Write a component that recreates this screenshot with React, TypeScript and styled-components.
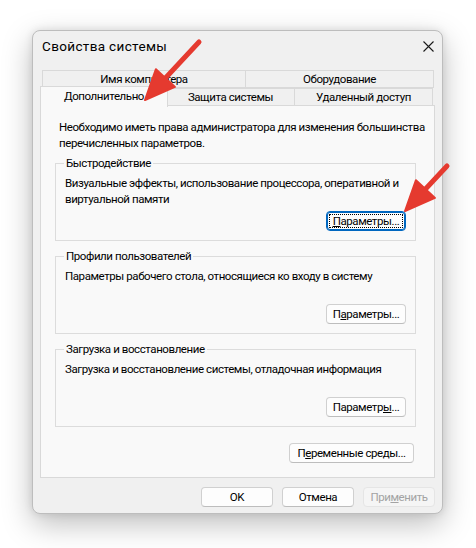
import React from 'react';
import styled, { createGlobalStyle } from 'styled-components';

const Global = createGlobalStyle`
  html, body { margin: 0; padding: 0; background: #ffffff; }
  body {
    font-family: Roboto, "Liberation Sans", Arial, sans-serif;
    font-size: 11.5px;
    letter-spacing: -0.42px;
    color: #000;
  }
  * { box-sizing: border-box; }
`;

const Page = styled.div`
  position: relative;
  width: 476px;
  height: 548px;
  padding: 30px 0 0 32px;
`;

const Window = styled.div`
  width: 411px;
  height: 484px;
  background: #f0f0f0;
  border: 1px solid #bdbdbd;
  border-radius: 8px;
  box-shadow: 0 10px 30px rgba(0, 0, 0, 0.26), 0 0 8px rgba(0, 0, 0, 0.1);
  display: flex;
  flex-direction: column;
`;

const TitleBar = styled.div`
  height: 30px;
  display: flex;
  align-items: center;
  justify-content: space-between;
  padding-left: 9px;
`;

const Title = styled.span`
  font-size: 13.5px;
  letter-spacing: 0.35px;
`;

const CloseBox = styled.div`
  width: 28px;
  height: 30px;
  display: flex;
  align-items: center;
  justify-content: center;
`;

const Body = styled.div`
  flex: 1;
  display: flex;
  flex-direction: column;
  padding: 9px 7px 0 7px;
  white-space: nowrap;
`;

const TabStrip = styled.div`
  display: flex;
  flex-direction: column;
`;

const TabRow = styled.div<{ $front?: boolean }>`
  display: flex;
  padding: 0 2px;
  height: 18px;
  position: relative;
  z-index: ${(p) => (p.$front ? 2 : 1)};
`;

const Tab = styled.div<{ $w: number; $selected?: boolean }>`
  flex: none;
  width: ${(p) => p.$w}px;
  height: ${(p) => (p.$selected ? 21 : 18)}px;
  margin-top: ${(p) => (p.$selected ? -2 : 0)}px;
  margin-left: ${(p) => (p.$selected ? -2 : -1)}px;
  margin-right: ${(p) => (p.$selected ? -1 : 0)}px;
  &:first-child { margin-left: ${(p) => (p.$selected ? -2 : 0)}px; }
  border: 1px solid #d9d9d9;
  border-bottom: ${(p) => (p.$selected ? 'none' : '1px solid #d9d9d9')};
  background: ${(p) => (p.$selected ? '#f9f9f9' : '#f0f0f0')};
  display: flex;
  align-items: center;
  justify-content: center;
  line-height: 14px;
  position: relative;
  z-index: ${(p) => (p.$selected ? 3 : 1)};
  padding-bottom: ${(p) => (p.$selected ? 2 : 0)}px;
`;

const Panel = styled.div`
  height: 373px;
  margin-top: -1px;
  background: #f9f9f9;
  border: 1px solid #d9d9d9;
  padding: 13px 18px 0 14px;
  display: flex;
  flex-direction: column;
`;

const Intro = styled.p`
  margin: 0 0 5px 4px;
  line-height: 16px;
`;

const Group = styled.fieldset`
  margin: 0 0 8px 0;
  padding: 0 9px 9px 9px;
  border: 1px solid #dcdcdc;
  min-width: 0;
  display: flex;
  flex-direction: column;
`;

const Legend = styled.legend`
  padding: 0 2px;
  margin-left: -1px;
  line-height: 14px;
`;

const GroupText = styled.div`
  margin-top: 5px;
  height: 32px;
  line-height: 16px;
`;

const ButtonRow = styled.div`
  display: flex;
  justify-content: flex-end;
  margin-top: 4px;
`;

const Button = styled.button<{ $w: number; $focused?: boolean }>`
  width: ${(p) => p.$w}px;
  height: 20px;
  padding: 0;
  font: inherit;
  letter-spacing: inherit;
  color: #000;
  background: #fdfdfd;
  border: 1px solid ${(p) => (p.$focused ? '#0067c0' : '#d0d0d0')};
  border-bottom-color: ${(p) => (p.$focused ? '#0067c0' : '#bdbdbd')};
  border-radius: 4px;
  display: flex;
  align-items: center;
  justify-content: center;
  position: relative;
  ${(p) =>
    p.$focused
      ? `box-shadow: inset 0 0 0 1px #0067c0; outline: 1px dotted #000; outline-offset: -4px;`
      : ''}
  &:disabled {
    color: #a3a3a3;
    background: #f5f5f5;
    border-color: #e5e5e5;
  }
`;

const BottomBar = styled.div`
  display: flex;
  justify-content: flex-end;
  gap: 9px;
  padding: 9px 0 0 0;
`;

const Key = styled.span`
  text-decoration: underline;
`;

const EnvRow = styled.div`
  display: flex;
  justify-content: flex-end;
  margin-top: 8px;
  padding-right: 2px;
`;

const Overlay = styled.svg`
  position: absolute;
  left: 0;
  top: 0;
  width: 476px;
  height: 548px;
  pointer-events: none;
  z-index: 10;
`;

function Arrow({ x1, y1, x2, y2 }: { x1: number; y1: number; x2: number; y2: number }) {
  const dx = x2 - x1;
  const dy = y2 - y1;
  const len = Math.hypot(dx, dy);
  const ux = dx / len;
  const uy = dy / len;
  const hl = 30;
  const hw = 13;
  const bx = x2 - ux * hl;
  const by = y2 - uy * hl;
  const nx = -uy;
  const ny = ux;
  const pts = `${x2},${y2} ${bx + nx * hw},${by + ny * hw} ${bx - nx * hw},${by - ny * hw}`;
  return (
    <g>
      <line x1={x1} y1={y1} x2={bx + ux * 4} y2={by + uy * 4} stroke="#e53a2f" strokeWidth={5} strokeLinecap="round" />
      <polygon points={pts} fill="#e53a2f" stroke="#e53a2f" strokeWidth={2} strokeLinejoin="round" />
    </g>
  );
}

export default function App() {
  return (
    <Page>
      <Global />
      <Window>
        <TitleBar>
          <Title>Свойства системы</Title>
          <CloseBox>
            <svg width="11" height="11" viewBox="0 0 11 11">
              <path d="M0.5 0.5 L10.5 10.5 M10.5 0.5 L0.5 10.5" stroke="#1a1a1a" strokeWidth="1.1" />
            </svg>
          </CloseBox>
        </TitleBar>
        <Body>
          <TabStrip>
            <TabRow>
              <Tab $w={204}>Имя компьютера</Tab>
              <Tab $w={189}>Оборудование</Tab>
            </TabRow>
            <TabRow $front>
              <Tab $w={128} $selected>Дополнительно</Tab>
              <Tab $w={129}>Защита системы</Tab>
              <Tab $w={139}>Удаленный доступ</Tab>
            </TabRow>
          </TabStrip>
          <Panel>
            <Intro>
              Необходимо иметь права администратора для изменения большинства
              <br />
              перечисленных параметров.
            </Intro>
            <Group>
              <Legend>Быстродействие</Legend>
              <GroupText>
                Визуальные эффекты, использование процессора, оперативной и
                <br />
                виртуальной памяти
              </GroupText>
              <ButtonRow>
                <Button $w={80} $focused>
                  <Key>П</Key>араметры...
                </Button>
              </ButtonRow>
            </Group>
            <Group>
              <Legend>Профили пользователей</Legend>
              <GroupText>Параметры рабочего стола, относящиеся ко входу в систему</GroupText>
              <ButtonRow>
                <Button $w={80}>
                  П<Key>а</Key>раметры...
                </Button>
              </ButtonRow>
            </Group>
            <Group>
              <Legend>Загрузка и восстановление</Legend>
              <GroupText>Загрузка и восстановление системы, отладочная информация</GroupText>
              <ButtonRow>
                <Button $w={80}>
                  Параметр<Key>ы</Key>...
                </Button>
              </ButtonRow>
            </Group>
            <EnvRow>
              <Button $w={125}>
                П<Key>е</Key>ременные среды...
              </Button>
            </EnvRow>
          </Panel>
          <BottomBar>
            <Button $w={72}>OK</Button>
            <Button $w={72}>Отмена</Button>
            <Button $w={72} disabled>
              При<Key>м</Key>енить
            </Button>
          </BottomBar>
        </Body>
      </Window>
      <Overlay viewBox="0 0 476 548">
        <Arrow x1={199} y1={42} x2={145} y2={100} />
        <Arrow x1={447} y1={166} x2={405} y2={211} />
      </Overlay>
    </Page>
  );
}
